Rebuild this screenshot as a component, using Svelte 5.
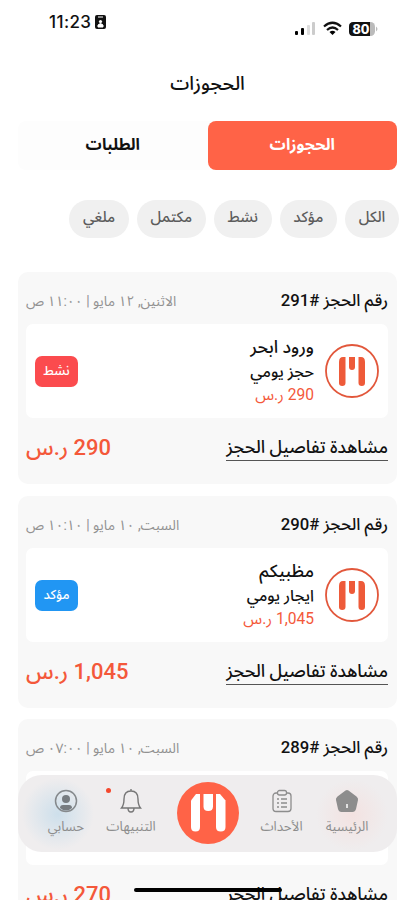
<script lang="ts">
    const filters = ["الكل", "مؤكد", "نشط", "مكتمل", "ملغي"];

    const bookings = [
        { id: 291, date: "الاثنين, ١٢ مايو | ١١:٠٠ ص", place: "ورود ابحر", kind: "حجز يومي", price: "290", status: "نشط", tone: "active" },
        { id: 290, date: "السبت, ١٠ مايو | ١٠:١٠ ص", place: "مظبيكم", kind: "ايجار يومي", price: "1,045", status: "مؤكد", tone: "confirmed" },
        { id: 289, date: "السبت, ١٠ مايو | ٠٧:٠٠ ص", place: "", kind: "", price: "270", status: "", tone: "" },
    ];
</script>

<style>
    :global(body) {
        background: #fff;
        overflow: hidden;
    }

    .screen {
        position: relative;
        display: flex;
        flex-direction: column;
        box-sizing: border-box;
        width: 415px;
        height: 900px;
        padding: 0 18px;
        overflow: hidden;
        font-family: Roboto, "Noto Sans Arabic", "DejaVu Sans", sans-serif;
        color: #111;
        white-space: nowrap;
    }

    .status-bar {
        display: flex;
        flex: none;
        justify-content: space-between;
        height: 62px;
        padding: 0 18px 0 31px;
        font-family: Inter, sans-serif;
    }

    .clock {
        display: flex;
        align-items: center;
        gap: 4px;
        height: 43px;
        font-size: 17px;
        font-weight: 500;
        letter-spacing: .4px;
    }

    .signals {
        display: flex;
        align-items: center;
        height: 57px;
    }

    h1 {
        flex: none;
        height: 42px;
        margin: 0;
        line-height: 43px;
        text-align: center;
        font-size: 19.2px;
        font-weight: 500;
    }

    .tabs {
        display: flex;
        flex: none;
        height: 49px;
        margin-top: 17px;
        border-radius: 8px;
        background: #fdfdfd;
    }

    .tabs div {
        flex: 1;
        line-height: 47px;
        text-align: center;
        font-size: 16px;
        font-weight: 700;
    }

    .tabs .selected {
        border-radius: 8px;
        background: #ff6347;
        color: #fff;
    }

    .filters {
        display: flex;
        flex: none;
        gap: 8px;
        height: 38px;
        margin: 30px -2px 34px;
    }

    .filters span {
        padding: 0 13.7px;
        border-radius: 19px;
        background: #f0f0f0;
        color: #5c5c5c;
        font-size: 15px;
        font-weight: 500;
        line-height: 35px;
    }

    .card {
        flex: none;
        box-sizing: border-box;
        height: 212px;
        margin-bottom: 12px;
        padding: 0 9px 0 8px;
        border-radius: 10px;
        background: #f8f8f8;
    }

    .card:nth-last-of-type(3) {
        margin-top: -1px;
    }

    .card-head,
    .card-foot {
        display: flex;
        align-items: center;
        justify-content: space-between;
    }

    .card-head {
        box-sizing: border-box;
        height: 52px;
        padding-top: 6px;
        line-height: 46px;
    }

    .number {
        font-size: 16.7px;
        font-weight: 500;
    }

    .date {
        color: #929292;
        font-size: 13.9px;
    }

    .unit {
        display: flex;
        align-items: center;
        box-sizing: border-box;
        height: 94px;
        padding: 0 9px;
        border-radius: 7px;
        background: #fff;
    }

    .unit .mark {
        flex: none;
        width: 54px;
        height: 54px;
    }

    .details {
        flex: 1;
        margin-right: 11px;
    }

    .details div {
        height: 24px;
        line-height: 25px;
        font-size: 15.9px;
        font-weight: 500;
    }

    .details .place {
        font-size: 17.6px;
        line-height: 24px;
    }

    .details .cost {
        color: #f4583a;
        font-size: 15.6px;
        font-weight: 400;
    }

    .badge {
        width: 43px;
        height: 31px;
        border-radius: 7px;
        color: #fff;
        text-align: center;
        font-size: 13px;
        font-weight: 500;
        line-height: 29px;
    }

    .active {
        background: #fb4b4e;
    }

    .confirmed {
        background: #2196f3;
    }

    .card-foot {
        height: 60px;
    }

    .link {
        height: 24px;
        border-bottom: 1px solid #555;
        font-size: 17.6px;
        font-weight: 500;
        line-height: 23px;
    }

    .total {
        color: #f4583a;
        font-size: 22px;
        font-weight: 500;
    }

    .nav {
        position: absolute;
        left: 18px;
        top: 775px;
        display: grid;
        grid-template-columns: 64px 67px 80px 74px 56px;
        box-sizing: border-box;
        width: 379px;
        height: 77px;
        padding-right: 18px;
        border-radius: 24px;
        background:
            radial-gradient(circle at 40px 39px, #cddfeb 0, #cddfeb00 36px),
            radial-gradient(circle at 334px 40px, #f3e2e1 0, #f3e2e100 36px),
            #efedee;
    }

    .item {
        display: flex;
        flex-direction: column;
        align-items: center;
        padding-top: 14px;
        color: #8d8d8d;
        font-size: 13.3px;
    }

    .item span {
        line-height: 28px;
    }

    .item svg {
        flex: none;
    }

    .center {
        width: 62px;
        height: 62px;
        margin: 7px auto 0;
    }

    .dot {
        position: absolute;
        left: 88px;
        top: 13px;
        width: 5px;
        height: 5px;
        border-radius: 50%;
        background: #f4482d;
    }

    .home-bar {
        position: absolute;
        left: 134px;
        top: 888px;
        width: 148px;
        height: 4px;
        border-radius: 2px;
        background: #000;
    }
</style>

<div class="screen" dir="rtl">
    <div class="status-bar" dir="ltr">
        <div class="clock">
            <span>11:23</span>
            <svg width="11" height="14" viewBox="0 0 11 14">
                <rect width="11" height="14" rx="2" fill="#111" />
                <path d="M3 2h5M3 12V10Q5.500 7 8 10V12Z" fill="#fff" stroke="#fff" />
                <circle cx="5.500" cy="6.500" r="1.600" fill="#fff" />
            </svg>
        </div>
        <div class="signals">
            <svg width="85" height="18" viewBox="0 0 85 18">
                <rect x="1" y="11" width="3" height="4" rx="1" />
                <rect x="7" y="8" width="3" height="7" rx="1" />
                <rect x="13" y="5" width="3" height="10" rx="1" fill="#ddd" />
                <rect x="18" y="2" width="3" height="13" rx="1" fill="#ccc" />
                <g fill="none" stroke="#111" stroke-width="2.200">
                    <path d="M30 6.500Q38.500 -1 47 6.500M33 10Q38.500 5 44 10" />
                </g>
                <path d="M35.500 12Q38.500 9.500 41.500 12L38.500 15Z" />
                <rect x="55" y="2" width="26" height="14" rx="4.500" fill="#bbb" />
                <path d="M59.500 2H76V16H59.500Q55 16 55 11.500V6.500Q55 2 59.500 2Z" fill="#111" />
                <path d="M82 6.500Q85 9 82 11.500Z" fill="#bbb" />
                <text x="67" y="13.500" text-anchor="middle" font-size="12.500" font-weight="800" fill="#fff">80</text>
            </svg>
        </div>
    </div>

    <h1>الحجوزات</h1>

    <div class="tabs">
        <div class="selected">الحجوزات</div>
        <div>الطلبات</div>
    </div>

    <div class="filters">
        {#each filters as filter}
            <span>{filter}</span>
        {/each}
    </div>

    {#each bookings as booking}
        <div class="card">
            <div class="card-head">
                <span class="number">رقم الحجز #{booking.id}</span>
                <span class="date">{booking.date}</span>
            </div>
            <div class="unit">
                {#if booking.place}
                    <svg class="mark" viewBox="0 0 54 54">
                        <circle cx="27" cy="27" r="26" fill="none" stroke="#e2573b" stroke-width="1.800" />
                        <g fill="#ee5a39">
                            <path d="M14 18Q14 13 18 13H20.500V39Q20.500 42 17.200 42Q14 42 14 39Z" />
                            <path d="M33.500 13H36Q40 13 40 18V39Q40 42 36.800 42Q33.500 42 33.500 39Z" />
                            <path d="M24 13H30V23Q30 26 27 26Q24 26 24 23Z" />
                        </g>
                    </svg>
                    <div class="details">
                        <div class="place">{booking.place}</div>
                        <div>{booking.kind}</div>
                        <div class="cost">{booking.price} ر.س</div>
                    </div>
                    <div class="badge {booking.tone}">{booking.status}</div>
                {/if}
            </div>
            <div class="card-foot">
                <span class="link">مشاهدة تفاصيل الحجز</span>
                <span class="total">{booking.price} ر.س</span>
            </div>
        </div>
    {/each}

    <div class="nav">
        <div class="item">
            <svg width="24" height="24" viewBox="0 0 24 24">
                <path d="M10.500 1.500Q12 .5 13.500 1.500L21.500 7.500Q23.500 9 23 11L21 20Q20.200 23 17.500 23H6.500Q3.800 23 3 20L1 11Q.5 9 2.500 7.500Z" fill="#8d8d8d" />
                <path d="M12 15V19" stroke="#fff" stroke-width="1.500" />
            </svg>
            <span>الرئيسية</span>
        </div>
        <div class="item">
            <svg width="24" height="24" viewBox="0 0 24 24">
                <g fill="none" stroke="#8d8d8d" stroke-width="1.300">
                    <rect x="3" y="4" width="18" height="18.500" rx="3" />
                    <rect x="7.500" y="1.500" width="9" height="4.500" rx="2" fill="#efedee" />
                    <path d="M7 10H9M11 10H17M7 14H9M11 14H17M7 18H9M11 18H17" />
                </g>
            </svg>
            <span>الأحداث</span>
        </div>
        <svg class="center" viewBox="0 0 62 62">
            <circle cx="31" cy="31" r="31" fill="#ff6347" />
            <g fill="#fff">
                <path d="M14 18.500L19 12H23V45Q23 49.500 18.500 49.500Q14 49.500 14 45Z" />
                <path d="M26.500 12H36V24.500Q36 29 31.200 29Q26.500 29 26.500 24.500Z" />
                <path d="M39 12H43L48.500 18.500V45Q48.500 49.500 43.800 49.500Q39 49.500 39 45Z" />
            </g>
        </svg>
        <div class="item">
            <svg width="24" height="24" viewBox="0 0 24 24">
                <g fill="none" stroke="#777" stroke-width="1.400">
                    <path d="M12 2Q5 2 5 10Q5 16 2.500 19H21.500Q19 16 19 10Q19 2 12 2ZM9 19Q9 23 12 23Q15 23 15 19M12 0V2" />
                </g>
            </svg>
            <span>التنبيهات</span>
        </div>
        <div class="item">
            <svg width="24" height="24" viewBox="0 0 24 24">
                <circle cx="12" cy="12" r="10.500" fill="none" stroke="#85898c" stroke-width="1.500" />
                <circle cx="12" cy="10" r="4" fill="#777c80" />
                <path d="M6 19Q6 16 9 16H15Q18 16 18 19Q12 24 6 19Z" fill="#777c80" />
            </svg>
            <span>حسابي</span>
        </div>
        <i class="dot"></i>
    </div>
    <div class="home-bar"></div>
</div>
